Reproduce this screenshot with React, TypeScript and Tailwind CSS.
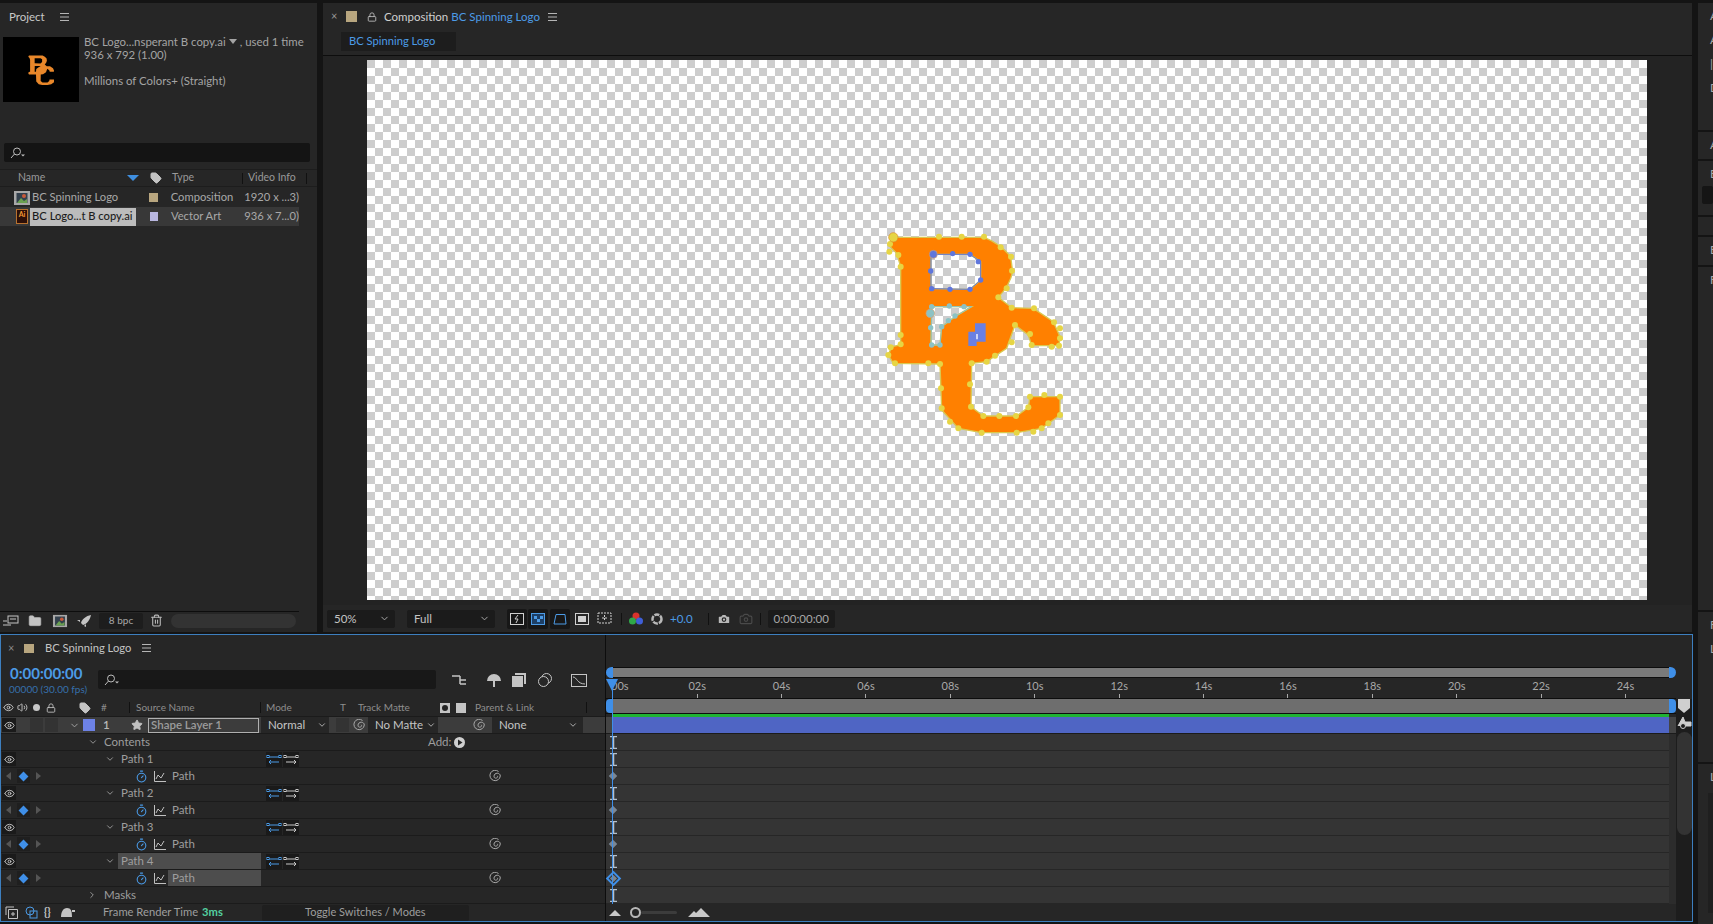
import { ReactNode } from 'react';
import { Camera, ChevronDown, ChevronRight, Eye, Folder, Lock, Star, Tag, Timer, Trash2, Volume2 } from 'lucide-react';

const LOGO_OUTLINE =
  'M100 82L372 82Q420 100 452 140L458 185Q450 225 415 262L455 293L520 295L580 335L600 380L597 407L515 407L505 375L465 345L440 415L380 455L335 460L333 590L370 618L470 618L505 592L510 560L600 560L600 615L545 655L470 668L365 668L295 655L245 600L240 462L100 460L85 435L95 410L122 405L122 170L110 130L85 105Z' +
  'M213 133L330 133L362 155L362 210L330 238L213 236Z' +
  'M215 290L335 290L285 320L245 350L240 405L213 405Z';

const YELLOW_POINTS = [
  [90, 102], [88, 125], [115, 135], [122, 170], [237, 80], [305, 80], [372, 80], [422, 112], [453, 140], [456, 182],
  [440, 235], [415, 262], [455, 293], [522, 295], [582, 337], [600, 355], [600, 385], [597, 407], [575, 410], [515, 405],
  [510, 372], [465, 345], [455, 397], [405, 437], [380, 455], [335, 460], [330, 523], [333, 590], [370, 618], [418, 618],
  [468, 618], [505, 592], [510, 560], [553, 555], [600, 560], [600, 615], [565, 640], [545, 655], [520, 665], [470, 668],
  [365, 668], [295, 655], [270, 635], [245, 595], [243, 535], [240, 462], [205, 460], [105, 460], [85, 435], [92, 412],
  [122, 403], [122, 375],
];
const BLUE_POINTS = [[278, 131], [330, 133], [355, 155], [362, 210], [330, 238], [270, 238], [215, 236], [212, 183]];
const TEAL_POINTS = [[215, 290], [268, 288], [312, 290], [285, 318], [265, 332], [245, 350], [240, 405], [215, 405], [212, 353]];

const RULER = ['02s', '04s', '06s', '08s', '10s', '12s', '14s', '16s', '18s', '20s', '22s', '24s'];
const TRACK_MARKS = ['beam', 'beam', 'key', 'beam', 'key', 'beam', 'key', 'beam', 'active', 'beam'];

function Burger() {
  return (
    <svg width="9" height="8" viewBox="0 0 9 8" className="text-[#b5b5b5]">
      <path d="M0 .5h9M0 4h9M0 7.5h9" stroke="currentColor" />
    </svg>
  );
}

function Whip({ size = 12 }: { size?: number }) {
  return (
    <svg width={size} height={size} viewBox="0 0 12 12" fill="none" stroke="#a8a8a8" strokeWidth="1">
      <path d="M9.500 1.500A5.200 5.200 0 1 0 11.300 6C11.300 4.200 9.800 3.200 8.200 3.200S5 4.500 5 6.200 6.200 8.500 7.500 8 8.800 6.500 8.300 5.800" />
    </svg>
  );
}

function SearchGlyph() {
  return (
    <svg width="16" height="12" viewBox="0 0 16 12" fill="none" stroke="#bdbdbd">
      <circle cx="7" cy="4.5" r="3.5" />
      <path d="M4.500 7 1 11" />
      <path d="M11 7.500h4l-2 2z" fill="#bdbdbd" stroke="none" />
    </svg>
  );
}

function SwitchPair() {
  return (
    <div className="flex gap-[1px]">
      <svg width="16" height="15" viewBox="0 0 16 15" className="bg-[#1a1a1a]" fill="none" stroke="#4a9be8">
        <path d="M3 5h10M13 10H3M5 8l-2 2 2 2" />
        <rect x="1" y="3.500" width="2" height="2" />
        <rect x="13" y="3.500" width="2" height="2" />
      </svg>
      <svg width="16" height="15" viewBox="0 0 16 15" className="bg-[#1a1a1a]" fill="none" stroke="#c8c8c8">
        <path d="M3 5h10M3 10h10M11 8l2 2-2 2" />
        <rect x="1" y="3.500" width="2" height="2" />
        <rect x="13" y="3.500" width="2" height="2" />
      </svg>
    </div>
  );
}

function FileIcon({ active }: { active?: boolean }) {
  if (active) {
    return (
      <div className="w-[12px] h-[15px] bg-[#2c0f08] border border-[#b9722f] flex items-start justify-center text-[7px] leading-[9px] font-bold text-[#f59a33]">
        Ai
      </div>
    );
  }
  return (
    <svg width="16" height="14" viewBox="0 0 16 14">
      <rect x="0" y="0" width="16" height="14" fill="#a8a8a8" />
      <rect x="2.500" y="2" width="11" height="10" fill="#33404d" />
      <path d="M3 12l4-5 3 3 3-2v4z" fill="#6aa050" />
      <circle cx="10" cy="5" r="2" fill="#c85a3a" />
    </svg>
  );
}

function HeaderSep() {
  return <span className="w-[1px] h-[11px] bg-[#111]" />;
}

function MiniSelect({ label, className }: { label: string; className: string }) {
  return (
    <div className={`h-[18px] flex items-center justify-between pl-[7px] pr-[5px] bg-[#1b1b1b] rounded-[2px] text-[#c4c4c4] ${className}`}>
      {label}
      <ChevronDown size={11} className="text-[#b0b0b0]" />
    </div>
  );
}

function ProjectPanel() {
  return (
    <aside className="w-[317px] shrink-0 bg-[#262626] flex flex-col">
      <div className="h-[28px] mb-[6px] flex items-center gap-[15px] pl-[9px] text-[#c8c8c8] text-[11.500px]">
        Project
        <Burger />
      </div>
      <div className="h-[66px] flex pl-[3px] gap-[5px] text-[#a4a4a4] text-[11.400px] leading-[13px]">
        <div className="w-[76px] h-[65px] bg-black flex items-center justify-center">
          <svg width="28" height="32" viewBox="60 60 560 620">
            <path d={LOGO_OUTLINE} fill="#e8872a" fillRule="evenodd" />
          </svg>
        </div>
        <div className="-mt-[2px]">
          <p className="flex items-center gap-[3px]">
            BC Logo...nsperant B copy.ai
            <span className="w-0 h-0 border-x-[4px] border-x-transparent border-t-[5px] border-t-[#a4a4a4]" />
            , used 1 time
          </p>
          <p>936 x 792 (1.00)</p>
          <p className="mt-[13px]">Millions of Colors+ (Straight)</p>
        </div>
      </div>
      <div className="h-[19px] mt-[40px] ml-[4px] mr-[7px] bg-[#141414] rounded-[2px] flex items-center pl-[6px]">
        <SearchGlyph />
      </div>
      <div className="h-[18px] mt-[7px] mb-[1px] flex items-center text-[10.500px] text-[#9a9a9a] border-b border-[#1d1d1d] border-t">
        <span className="ml-[13px]"><HeaderSep /></span>
        <span className="ml-[5px] w-[109px]">Name</span>
        <span className="w-0 h-0 border-x-[6px] border-x-transparent border-t-[6px] border-t-[#3f8fe0]" />
        <span className="ml-[4px]"><HeaderSep /></span>
        <Tag size={12} fill="#c4c4c4" className="text-[#c4c4c4] ml-[7px]" />
        <span className="ml-[4px]"><HeaderSep /></span>
        <span className="ml-[6px] w-[70px]">Type</span>
        <HeaderSep />
        <span className="ml-[5px] w-[58px]">Video Info</span>
        <HeaderSep />
      </div>
      <div className="h-[19px] w-[299px] flex items-center text-[11.200px] text-[#a8a8a8]">
        <span className="ml-[14px] w-[19px] flex"><FileIcon /></span>
        <span className="w-[117px]">BC Spinning Logo</span>
        <span className="ml-[7px] w-[9px] h-[9px] bg-[#b8a67f]" />
        <span className="ml-[13px] w-[77px]">Composition</span>
        <span className="ml-[1px] whitespace-nowrap">1920 x ...3)</span>
      </div>
      <div className="h-[19px] w-[299px] bg-[#383838] flex items-center text-[11.200px] text-[#a8a8a8]">
        <span className="ml-[16px] w-[15px] flex"><FileIcon active /></span>
        <span className="w-[112px] h-[18px] bg-[#bcbcbc] text-[#1c1c1c] font-medium flex items-center pl-[2px]">BC Logo...t B copy.ai</span>
        <span className="ml-[14px] w-[9px] h-[9px] bg-[#b9b7e0]" />
        <span className="ml-[13px] w-[77px]">Vector Art</span>
        <span className="ml-[1px] whitespace-nowrap">936 x 7...0)</span>
      </div>
      <div className="flex-1" />
      <div className="h-[1px] w-[299px] bg-[#0d0d0d]" />
      <div className="h-[20px] pb-[3px] w-[299px] flex items-center pl-[3px] text-[#b8b8b8]">
        <svg width="16" height="12" viewBox="0 0 16 12" fill="none" stroke="#c4c4c4">
          <rect x="5" y="1" width="10" height="7" />
          <path d="M7 4h6M0 6h4M0 10h8" />
        </svg>
        <Folder size={14} fill="#c4c4c4" strokeWidth={1} className="ml-[9px]" />
        <div className="ml-[10px] scale-90 flex"><FileIcon /></div>
        <svg width="14" height="12" viewBox="0 0 14 12" className="ml-[9px]" fill="#c4c4c4">
          <path d="M14 0C9 1 5 4 4 8l2 2c4-1 7-5 8-10zM3 5H0l3 2zM7 11l2 1v-3z" />
        </svg>
        <div className="ml-[8px] w-[44px] h-[16px] bg-[#1d1d1d] rounded-[2px] text-[10px] text-[#a8a8a8] flex items-center justify-center">8 bpc</div>
        <Trash2 size={13} className="ml-[7px]" />
        <div className="ml-[8px] w-[125px] h-[14px] rounded-full bg-[#333]" />
      </div>
    </aside>
  );
}

function ViewerLogo() {
  return (
    <svg width="220" height="240" viewBox="0 0 660 720" className="absolute left-[493px] top-[150px]">
      <path d={LOGO_OUTLINE} fill="#ff8000" fillRule="evenodd" stroke="#d9c850" strokeWidth="4" />
      {YELLOW_POINTS.map(([x, y]) => (
        <circle key={`${x}-${y}`} cx={x} cy={y} r="9" fill="#e6d544" />
      ))}
      <circle cx="100" cy="82" r="14" fill="#e6d544" stroke="#d98a2a" strokeWidth="2" />
      <path d="M213 133L330 133L362 155L362 210L330 238L213 236Z" fill="none" stroke="#5f76dc" strokeWidth="3" />
      {BLUE_POINTS.map(([x, y]) => (
        <circle key={`${x}-${y}`} cx={x} cy={y} r="8" fill="#5f76dc" />
      ))}
      <circle cx="220" cy="133" r="12" fill="#5f76dc" stroke="#d9a070" strokeWidth="2" />
      <path d="M215 290L335 290L285 320L245 350L240 405L213 405Z" fill="none" stroke="#8cc2c4" strokeWidth="3" />
      {TEAL_POINTS.map(([x, y]) => (
        <circle key={`${x}-${y}`} cx={x} cy={y} r="8" fill="#8cc2c4" />
      ))}
      <circle cx="211" cy="310" r="13" fill="#8cc2c4" stroke="#d9a070" strokeWidth="2" />
      <path d="M325 365h20v-25h32v55h-27v13h-25z" fill="#6a80e2" />
      <path d="M349 372h4v16h-4z" fill="#fff" />
    </svg>
  );
}

function CompPanel() {
  return (
    <main className="w-[1369px] ml-[6px] shrink-0 flex flex-col bg-[#262626]">
      <div className="h-[27px] flex items-center text-[11.500px] text-[#d0d0d0]">
        <span className="ml-[8px] w-[15px] text-[11px] text-[#9a9a9a]">×</span>
        <span className="w-[11px] h-[11px] bg-[#b8a67f]" />
        <Lock size={10} className="ml-[10px] text-[#c4c4c4]" />
        <span className="ml-[7px]">Composition</span>
        <span className="ml-[3px] text-[#4c9be6]">BC Spinning Logo</span>
        <span className="ml-[8px]"><Burger /></span>
      </div>
      <div className="h-[25px] pl-[18px] pt-[2px]">
        <div className="w-[115px] h-[19px] bg-[#1d1d1d] text-[#4c9be6] text-[11.200px] flex items-center pl-[8px]">BC Spinning Logo</div>
      </div>
      <div className="h-[1px] bg-[#0d0d0d]" />
      <div className="relative h-[549px] bg-[#232323] pl-[44px] pt-[4px]">
        <div className="relative w-[1280px] h-[540px] bg-[conic-gradient(#fff_25%,#cdcdcd_0_50%,#fff_0_75%,#cdcdcd_0)] bg-[length:16px_16px]">
          <ViewerLogo />
        </div>
      </div>
      <div className="h-[26px] pt-[1px] flex items-center text-[11.500px] bg-[#262626]">
        <MiniSelect label="50%" className="ml-[4px] w-[68px]" />
        <MiniSelect label="Full" className="ml-[12px] w-[88px]" />
        <div className="ml-[12px] w-[20px] h-[20px] bg-[#171717] rounded-[2px] flex items-center justify-center">
          <svg width="14" height="12" viewBox="0 0 14 12" fill="none" stroke="#d0d0d0">
            <rect x=".5" y=".5" width="13" height="11" />
            <path d="M8 2 5 6h3l-2 4" />
          </svg>
        </div>
        <div className="ml-[1px] w-[20px] h-[20px] bg-[#171717] rounded-[2px] flex items-center justify-center">
          <svg width="14" height="12" viewBox="0 0 14 12">
            <rect x=".5" y=".5" width="13" height="11" fill="#1d3f66" stroke="#4c9be6" />
            <path d="M3 3h3v3H3zM9 3h3v3H9zM6 6h3v3H6z" fill="#4c9be6" />
          </svg>
        </div>
        <div className="ml-[2px] w-[20px] h-[20px] bg-[#171717] rounded-[2px] flex items-center justify-center">
          <svg width="14" height="12" viewBox="0 0 14 12" fill="none" stroke="#4c9be6">
            <path d="M3 1.500h9L13 11H1z" />
          </svg>
        </div>
        <svg width="14" height="12" viewBox="0 0 14 12" fill="none" stroke="#d0d0d0" className="ml-[5px]">
          <rect x=".5" y=".5" width="13" height="11" />
          <rect x="3.500" y="3.500" width="7" height="5" fill="#d0d0d0" />
        </svg>
        <svg width="15" height="14" viewBox="0 0 15 14" fill="none" stroke="#d0d0d0" className="ml-[8px]">
          <path d="M1 1h13v10H1zM7.500 3v6M5 6h5" strokeDasharray="2 1" />
        </svg>
        <span className="ml-[9px] w-[1px] h-[12px] bg-[#111]" />
        <svg width="14" height="14" viewBox="0 0 14 14" className="ml-[7px]">
          <circle cx="7" cy="4" r="3.500" fill="#d8322c" />
          <circle cx="3.500" cy="9" r="3.500" fill="#2fa84a" />
          <circle cx="10.500" cy="9" r="3.500" fill="#3f5fd8" />
        </svg>
        <svg width="12" height="12" viewBox="0 0 12 12" className="ml-[8px]" fill="none" stroke="#b8b8b8" strokeWidth="2.500">
          <circle cx="6" cy="6" r="4.500" strokeDasharray="5 1" />
        </svg>
        <span className="ml-[7px] text-[#4c9be6]">+0.0</span>
        <span className="ml-[15px] w-[1px] h-[12px] bg-[#111]" />
        <Camera size={14} fill="#b8b8b8" className="ml-[8px] text-[#262626]" />
        <Camera size={14} className="ml-[8px] text-[#4a4a4a]" />
        <span className="ml-[7px] w-[1px] h-[12px] bg-[#111]" />
        <div className="ml-[7px] w-[67px] h-[18px] bg-[#1b1b1b] rounded-[2px] text-[#a8a8a8] flex items-center justify-center">0:00:00:00</div>
      </div>
    </main>
  );
}

function Row({ children, className = '' }: { children?: ReactNode; className?: string }) {
  return <div className={`h-[17px] flex items-center border-b border-[#1b1b1b] text-[11.500px] text-[#9e9e9e] ${className}`}>{children}</div>;
}

function EyeCell() {
  return (
    <span className="ml-[1px] w-[14px] h-[14px] bg-[#1a1a1a] flex items-center justify-center">
      <Eye size={11} className="text-[#c8c8c8]" />
    </span>
  );
}

function PathLabel({ n, selected }: { n: number; selected?: boolean }) {
  return (
    <Row>
      <EyeCell />
      <ChevronDown size={10} className="ml-[89px] text-[#a8a8a8]" />
      <span className={`ml-[3px] w-[143px] h-[16px] flex items-center pl-[3px] ${selected ? 'bg-[#4d4d4d]' : ''}`}>Path {n}</span>
      <span className="ml-[5px]"><SwitchPair /></span>
    </Row>
  );
}

function PathValue({ selected }: { selected?: boolean }) {
  return (
    <Row>
      <span className="ml-[5px] w-0 h-0 border-y-[4px] border-y-transparent border-r-[5px] border-r-[#555]" />
      <span className="ml-[6px] w-[13px] h-[14px] bg-[#1f1f1f] flex items-center justify-center">
        <span className="w-[7px] h-[7px] bg-[#3f8fe8] rotate-45" />
      </span>
      <span className="ml-[6px] w-0 h-0 border-y-[4px] border-y-transparent border-l-[5px] border-l-[#555]" />
      <Timer size={13} className="ml-[94px] text-[#4a9be8]" />
      <svg width="12" height="11" viewBox="0 0 12 11" fill="none" stroke="#c0c0c0" className="ml-[6px]">
        <path d="M.5 0v10.500H12M2 8l2-4 3 3 3-5" />
      </svg>
      <span className={`ml-[2px] w-[93px] h-[16px] flex items-center pl-[4px] ${selected ? 'bg-[#4d4d4d]' : ''}`}>Path</span>
      <span className="ml-[228px] flex"><Whip /></span>
    </Row>
  );
}

function TimelineLeft() {
  return (
    <div className="w-[604px] shrink-0 flex flex-col">
      <div className="h-[26px] flex items-center text-[11.200px] text-[#c4c4c4]">
        <span className="ml-[7px] w-[16px] text-[11px] text-[#8c8c8c]">×</span>
        <span className="w-[10px] h-[9px] bg-[#b8a67f]" />
        <span className="ml-[11px]">BC Spinning Logo</span>
        <span className="ml-[11px]"><Burger /></span>
      </div>
      <div className="h-[38px] flex pl-[9px]">
        <div className="w-[88px] pt-[3px] text-[#4c9be6]">
          <p className="text-[15px] leading-[19px] font-bold">0:00:00:00</p>
          <p className="text-[10px] leading-[12px] -ml-[1px] text-[#3670ac]">00000 (30.00 fps)</p>
        </div>
        <div className="w-[338px] h-[19px] mt-[9px] bg-[#181818] rounded-[2px] flex items-center pl-[6px]">
          <SearchGlyph />
        </div>
        <div className="mt-[9px] flex items-center h-[19px] text-[#c4c4c4]">
          <svg width="16" height="14" viewBox="0 0 16 14" fill="none" stroke="currentColor" className="ml-[16px]">
            <path d="M0 3h8M8 3v8M8 7h6M8 11h6" strokeWidth="1.500" />
          </svg>
          <svg width="16" height="14" viewBox="0 0 16 14" fill="currentColor" className="ml-[18px]">
            <path d="M1 8a7 7 0 0 1 14 0zM7 8h2v6H7z" />
          </svg>
          <svg width="14" height="14" viewBox="0 0 14 14" fill="currentColor" className="ml-[10px]">
            <path d="M3 0h11v11h-2V2H3zM0 3h11v11H0z" />
          </svg>
          <svg width="14" height="14" viewBox="0 0 14 14" fill="none" stroke="currentColor" className="ml-[12px]">
            <circle cx="8.500" cy="5.500" r="5" />
            <circle cx="5.500" cy="8.500" r="5" fill="#262626" />
          </svg>
          <svg width="16" height="14" viewBox="0 0 16 14" fill="none" stroke="currentColor" className="ml-[19px]">
            <rect x=".5" y="1.500" width="15" height="12" />
            <path d="M2 4c4 0 4 7 12 7" />
          </svg>
        </div>
      </div>
      <div className="h-[18px] flex items-center text-[10px] text-[#8e8e8e] border-b border-[#1b1b1b]">
        <Eye size={11} className="ml-[2px] text-[#c8c8c8]" />
        <Volume2 size={11} className="ml-[3px] text-[#c8c8c8]" />
        <span className="ml-[5px] w-[7px] h-[7px] rounded-full bg-[#c8c8c8]" />
        <Lock size={10} className="ml-[6px] text-[#c8c8c8]" />
        <span className="ml-[6px]"><HeaderSep /></span>
        <Tag size={12} fill="#c4c4c4" className="ml-[17px] text-[#c4c4c4]" />
        <span className="ml-[1px]"><HeaderSep /></span>
        <span className="ml-[9px] w-[28px]">#</span>
        <HeaderSep />
        <span className="ml-[6px] w-[124px]">Source Name</span>
        <HeaderSep />
        <span className="ml-[5px] w-[74px]">Mode</span>
        <span className="w-[18px]">T</span>
        <span className="w-[82px]">Track Matte</span>
        <span className="w-[10px] h-[10px] bg-[#c4c4c4] flex items-center justify-center"><span className="w-[6px] h-[6px] rounded-full bg-[#222]" /></span>
        <span className="ml-[6px] w-[10px] h-[10px] bg-[#c4c4c4]" />
        <span className="ml-[5px]"><HeaderSep /></span>
        <span className="ml-[4px] w-[111px]">Parent &amp; Link</span>
        <HeaderSep />
      </div>
      <Row className="bg-[#3c3c3c]">
        <EyeCell />
        <span className="ml-[14px] w-[13px] h-[14px] bg-[#333]" />
        <span className="ml-[2px] w-[13px] h-[14px] bg-[#333]" />
        <ChevronDown size={11} className="ml-[11px] text-[#a8a8a8]" />
        <span className="ml-[3px] w-[12px] h-[12px] bg-[#6d82e6]" />
        <span className="ml-[8px] w-[28px] font-semibold text-[#b8b8b8]">1</span>
        <Star size={12} fill="#c0c0c0" className="text-[#c0c0c0]" />
        <span className="ml-[5px] w-[111px] h-[15px] border border-[#b0b0b0] flex items-center pl-[2px] text-[#9c9c9c] font-semibold">Shape Layer 1</span>
        <div className="ml-[2px] w-[68px] h-[16px] bg-[#262626] flex items-center justify-between pl-[7px] pr-[2px] text-[#c4c4c4]">
          Normal
          <ChevronDown size={10} />
        </div>
        <span className="ml-[7px] w-[13px] h-[14px] bg-[#333]" />
        <span className="ml-[4px] flex"><Whip /></span>
        <div className="ml-[3px] w-[70px] h-[16px] bg-[#262626] flex items-center justify-between pl-[7px] pr-[2px] text-[#c4c4c4]">
          No Matte
          <ChevronDown size={10} />
        </div>
        <span className="ml-[35px] flex"><Whip /></span>
        <div className="ml-[7px] w-[91px] h-[16px] bg-[#262626] flex items-center justify-between pl-[7px] pr-[5px] text-[#c4c4c4]">
          None
          <ChevronDown size={10} />
        </div>
      </Row>
      <Row>
        <ChevronDown size={10} className="ml-[87px] text-[#a8a8a8]" />
        <span className="ml-[6px] w-[324px]">Contents</span>
        <span className="w-[26px]">Add:</span>
        <svg width="11" height="11" viewBox="0 0 11 11">
          <circle cx="5.500" cy="5.500" r="5.500" fill="#d0d0d0" />
          <path d="M4 2.500v6l4.500-3z" fill="#262626" />
        </svg>
      </Row>
      {[1, 2, 3, 4].map((n) => (
        <div key={n}>
          <PathLabel n={n} selected={n === 4} />
          <PathValue selected={n === 4} />
        </div>
      ))}
      <Row>
        <ChevronRight size={10} className="ml-[86px] text-[#a8a8a8]" />
        <span className="ml-[7px]">Masks</span>
      </Row>
      <div className="h-[17px] flex items-center text-[11.200px] text-[#9e9e9e] bg-[#262626]">
        <svg width="13" height="13" viewBox="0 0 13 13" fill="none" stroke="#c4c4c4" className="ml-[4px]">
          <path d="M1 9V1h8M3.500 3.500h9v9h-9zM8 6v4M6 8h4" />
        </svg>
        <svg width="13" height="13" viewBox="0 0 13 13" fill="none" stroke="#4c9be6" className="ml-[7px]">
          <circle cx="5" cy="5" r="4" />
          <rect x="5" y="5" width="7" height="7" />
        </svg>
        <span className="ml-[6px] text-[11px] font-bold text-[#c4c4c4] w-[14px]">{'{}'}</span>
        <svg width="14" height="11" viewBox="0 0 14 11" fill="#c4c4c4" className="ml-[3px]">
          <path d="M0 10C0 5 2 1 6 1s5 3 5 9zM11 3h3v2h-3z" />
        </svg>
        <span className="ml-[28px]">Frame Render Time</span>
        <span className="ml-[4px] font-bold text-[#54d0a0]">3ms</span>
        <div className="ml-[39px] w-[207px] h-[16px] bg-[#1f1f1f] flex items-center justify-center rounded-[2px] text-[11px]">Toggle Switches / Modes</div>
      </div>
    </div>
  );
}

function TrackMark({ kind }: { kind: string }) {
  if (kind === 'beam') {
    return (
      <svg width="7" height="13" viewBox="0 0 7 13" fill="none" stroke="#b4c0cc">
        <path d="M0 .5h7M0 12.500h7M3.500 0v13" strokeWidth="1.500" />
      </svg>
    );
  }
  if (kind === 'active') {
    return (
      <span className="w-[11px] h-[11px] rotate-45 border-2 border-[#3f8fe8] flex items-center justify-center">
        <span className="w-[5px] h-[5px] bg-[#7b8794]" />
      </span>
    );
  }
  return <span className="w-[6px] h-[6px] rotate-45 bg-[#7b8794]" />;
}

function TimelineRight() {
  return (
    <div className="relative flex-1 flex">
      <div className="w-[1071px] flex flex-col border-l border-[#0d0d0d]">
        <div className="h-[32px] bg-[#262626]" />
        <div className="h-[11px] flex items-stretch">
          <span className="w-[7px] bg-[#3f8fe8] rounded-l-full" />
          <span className="w-[1056px] bg-[#7a7a7a] border-y border-[#0d0d0d]" />
          <span className="w-[7px] bg-[#3f8fe8] rounded-r-full" />
        </div>
        <div className="h-[20px] flex bg-[#262626] text-[11px] text-[#a8a8a8]">
          <span className="w-[49px] pl-[5px] leading-[16px]">00s</span>
          {RULER.map((t) => (
            <span key={t} className="flex flex-col items-center w-[84.4px] leading-[16px]">
              {t}
              <span className="w-[1px] h-[4px] bg-[#a8a8a8]" />
            </span>
          ))}
        </div>
        <div className="h-[16px] flex items-stretch border-y border-[#0d0d0d]">
          <span className="w-[7px] bg-[#3f8fe8] rounded-l-[4px]" />
          <span className="w-[1056px] bg-[#6e6e6e]" />
          <span className="w-[7px] bg-[#3f8fe8] rounded-r-[4px]" />
        </div>
        <div className="h-[3px] flex">
          <span className="w-[7px]" />
          <span className="w-[1056px] bg-[#1fb333]" />
        </div>
        <div className="h-[17px] flex bg-[#444] border-b border-[#1b1b1b]">
          <span className="ml-[7px] w-[1056px] bg-[#4f65c4]" />
        </div>
        {TRACK_MARKS.map((kind, i) => (
          <div key={i} className="h-[17px] flex items-center bg-[#343434] border-b border-[#262626]">
            <span className="w-[14px] flex justify-center">
              <TrackMark kind={kind} />
            </span>
            <span className="flex-1" />
            <span className="w-[7px] h-[17px] bg-[#2c2c2c]" />
          </div>
        ))}
        <div className="h-[17px] flex items-center bg-[#262626]">
          <svg width="12" height="6" viewBox="0 0 12 6" fill="#c8c8c8" className="ml-[3px]">
            <path d="M0 6l6-6 6 6z" />
          </svg>
          <span className="ml-[9px] w-[11px] h-[11px] rounded-full border-2 border-[#b8b8b8]" />
          <span className="w-[36px] h-[3px] bg-[#3c3c3c] rounded-full" />
          <svg width="22" height="9" viewBox="0 0 22 9" fill="#c8c8c8" className="ml-[11px]">
            <path d="M0 9l6-6 2 2 5-5 9 9z" />
          </svg>
        </div>
      </div>
      <div className="flex-1 flex flex-col bg-[#1d1d1d] items-center">
        <div className="h-[64px] w-full bg-[#262626]" />
        <svg width="12" height="14" viewBox="0 0 12 14" fill="#cfcfcf">
          <path d="M0 0h12v9l-6 5-6-5z" />
        </svg>
        <svg width="15" height="13" viewBox="0 0 15 13" fill="none" stroke="#cfcfcf" className="mt-[3px]">
          <path d="M1 10 6 1l2 5h6v4H9" fill="#cfcfcf" />
          <circle cx="6" cy="10" r="2.500" fill="#1d1d1d" />
        </svg>
        <div className="mt-[3px] w-[15px] h-[103px] rounded-full bg-[#333]" />
      </div>
      {/* Playhead */}
      <div className="absolute left-[7px] top-[44px] w-[1px] h-[225px] bg-[#3f8fe8]" />
      <div className="absolute left-[1px] top-[44px] w-0 h-0 border-x-[6px] border-x-transparent border-t-[12px] border-t-[#3f8fe8]" />
    </div>
  );
}

function SidePanel() {
  const sections = [
    { h: 'h-[127px]', lines: ['A', 'Al', '|', 'Di'] },
    { h: 'h-[27px]', lines: ['A'] },
    { h: 'h-[54px]', lines: ['E'], button: true },
    { h: 'h-[18px]', lines: [] },
    { h: 'h-[28px]', lines: ['E'] },
    { h: 'h-[343px]', lines: ['F'] },
    { h: 'h-[150px]', lines: ['F', 'L'] },
    { h: 'flex-1', lines: ['L'], well: true },
  ];
  return (
    <aside className="w-[15px] ml-[2px] flex flex-col gap-[2px] overflow-hidden text-[12px] text-[#a8a8a8]">
      {sections.map((s, i) => (
        <div key={i} className={`${s.h} bg-[#262626] pl-[12px] pt-[1px] leading-[24px]`}>
          {s.lines.map((l, j) => (
            <p key={j}>{l}</p>
          ))}
          {s.button && <div className="-ml-[8px] h-[18px] bg-[#151515] rounded-[2px]" />}
          {s.well && <div className="-ml-[2px] mt-[4px] h-[120px] bg-[#1f1f1f]" />}
        </div>
      ))}
    </aside>
  );
}

export default function App() {
  return (
    <div className="w-[1713px] h-[924px] overflow-hidden bg-[#141414] flex pt-[3px] font-['Lato',sans-serif]">
      <div className="w-[1696px] shrink-0 flex flex-col">
        <div className="h-[629px] flex pr-[4px]">
          <ProjectPanel />
          <CompPanel />
        </div>
        <section className="mt-[2px] w-[1693px] h-[288px] border border-[#3d7fbf] bg-[#262626] flex">
          <TimelineLeft />
          <TimelineRight />
        </section>
      </div>
      <SidePanel />
    </div>
  );
}
